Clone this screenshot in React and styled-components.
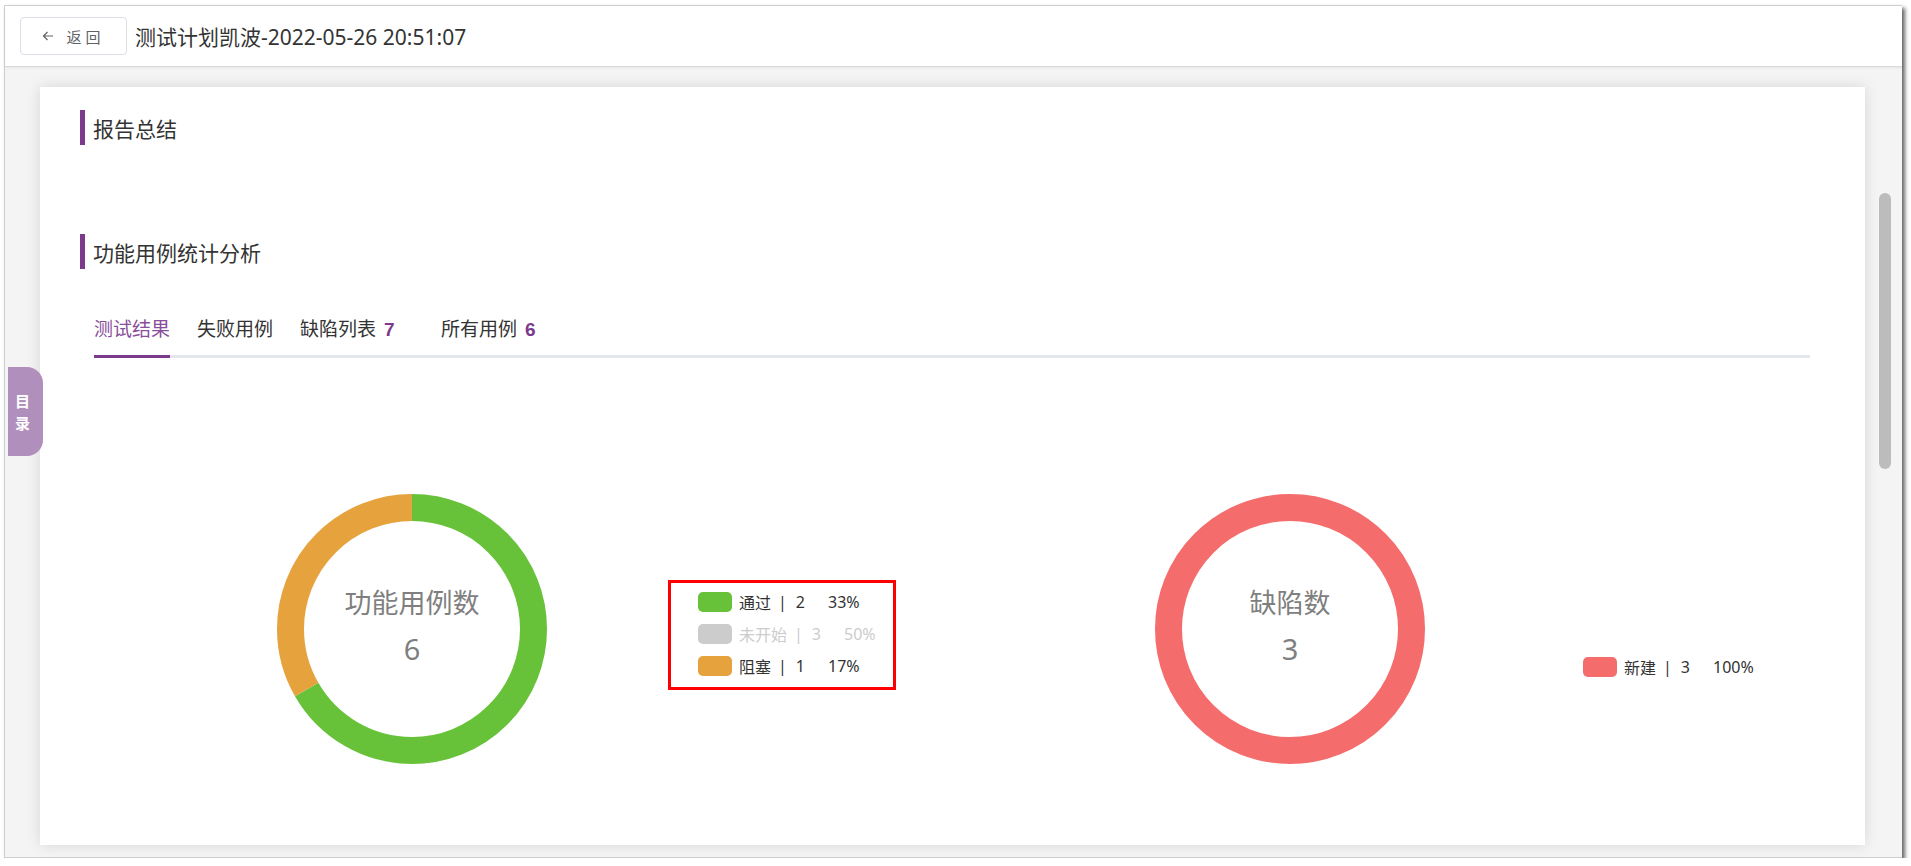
import React from 'react';
import styled, { createGlobalStyle } from 'styled-components';

const GlobalStyle = createGlobalStyle`
  html, body {
    margin: 0;
    padding: 0;
    background: #fff;
    overflow: hidden;
  }
  body {
    font-family: "Noto Sans", "Noto Sans CJK SC", sans-serif;
    color: #333;
  }
  * { box-sizing: border-box; }
`;

const PURPLE = '#7b3a8c';

const Window = styled.div`
  position: relative;
  margin: 5px 0 0 4px;
  width: 1898px;
  height: 853px;
  border: 1px solid #cfcfcf;
  border-right: none;
  box-shadow: 3px 3px 4px rgba(0, 0, 0, 0.6);
  display: flex;
  flex-direction: column;
  background: #f4f4f4;
`;

const Header = styled.div`
  height: 61px;
  flex: none;
  display: flex;
  align-items: center;
  padding-left: 15px;
  background: #fff;
  border-bottom: 1px solid #d8dae0;
  box-shadow: 0 1px 2px rgba(0, 0, 0, 0.06);
  position: relative;
  z-index: 1;
`;

const BackButton = styled.button`
  width: 107px;
  height: 38px;
  border: 1px solid #dcdfe6;
  border-radius: 4px;
  background: #fff;
  display: flex;
  align-items: center;
  justify-content: center;
  gap: 12px;
  padding: 0;
  color: #606266;
  font-family: "Noto Sans CJK SC", sans-serif;
  font-size: 15px;
  letter-spacing: 4px;
  cursor: pointer;
`;

const PageTitle = styled.h1`
  margin: 0 0 0 8px;
  font-size: 21px;
  font-weight: 400;
  color: #333;
`;

const Body = styled.div`
  flex: 1;
  display: flex;
  min-height: 0;
`;

const Main = styled.div`
  flex: 1;
  display: flex;
  padding: 20px 13px 12px 35px;
`;

const Card = styled.div`
  flex: 1;
  background: #fff;
  box-shadow: 0 0 14px rgba(0, 0, 0, 0.12);
  padding: 23px 55px 0 40px;
`;

const ScrollTrack = styled.div`
  width: 24px;
  flex: none;
  padding: 126px 0 0 1px;
`;

const ScrollThumb = styled.div`
  width: 12px;
  height: 276px;
  border-radius: 6px;
  background: #bcbcbc;
`;

const SectionTitle = styled.h2`
  margin: ${p => p.$gap || 0}px 0 0;
  height: 35px;
  display: flex;
  align-items: center;
  border-left: 5px solid ${PURPLE};
  padding-left: 8px;
  font-size: 21px;
  font-weight: 400;
  color: #333;
`;

const TabNav = styled.div`
  margin: 40px 0 0 14px;
  display: flex;
  border-bottom: 3px solid #e4e7ed;
`;

const TabItem = styled.div`
  line-height: 40px;
  padding-bottom: 5px;
  margin-bottom: -3px;
  margin-right: 27px;
  border-bottom: 3px solid ${p => (p.$active ? PURPLE : 'transparent')};
  font-size: 19px;
  color: ${p => (p.$active ? '#8a4f9c' : '#333')};
  display: flex;
  align-items: baseline;
`;

const Count = styled.span`
  margin-left: 8px;
  min-width: 30px;
  font-family: "Liberation Sans", sans-serif;
  font-weight: 700;
  color: ${PURPLE};
`;

const ChartsRow = styled.div`
  margin-top: 136px;
  display: flex;
  align-items: flex-start;
`;

const ChartPanel = styled.div`
  margin-left: ${p => p.$offset}px;
  display: flex;
  align-items: flex-start;
`;

const Legend = styled.div`
  margin-left: ${p => p.$left}px;
  margin-top: ${p => p.$top}px;
  width: ${p => (p.$framed ? '228px' : 'auto')};
  border: ${p => (p.$framed ? '3px solid #ff0000' : 'none')};
  padding: ${p => (p.$framed ? '3px 0 5px 27px' : '0')};
`;

const LegendRow = styled.div`
  height: 32px;
  display: flex;
  align-items: center;
  font-size: 16px;
  color: ${p => (p.$off ? '#cccccc' : '#333')};
  white-space: nowrap;
`;

const Swatch = styled.span`
  width: 34px;
  height: 20px;
  border-radius: 5px;
  margin-right: 7px;
  background: ${p => p.$color};
`;

const Sep = styled.span`
  margin: 0 9px 0 7px;
`;

const Pct = styled.span`
  margin-left: 23px;
`;

const SideTab = styled.div`
  position: absolute;
  left: 3px;
  top: 361px;
  width: 35px;
  height: 89px;
  border-radius: 0 16px 16px 0;
  background: #b08fbd;
  color: #fff;
  font-family: "Noto Sans CJK SC", sans-serif;
  font-size: 15px;
  font-weight: 700;
  display: flex;
  flex-direction: column;
  align-items: center;
  justify-content: center;
  gap: 7px;
  padding-right: 6px;
  line-height: 1;
`;

const R = 121.5;
const C = 2 * Math.PI * R;

function Donut({ segments, label, value }) {
  let offset = 0;
  return (
    <svg width="270" height="270" viewBox="0 0 270 270">
      <g transform="rotate(-90 135 135)">
        {segments.map((s, i) => {
          const len = C * s.part;
          const el = (
            <circle
              key={i}
              cx="135"
              cy="135"
              r={R}
              fill="none"
              stroke={s.color}
              strokeWidth="27"
              strokeDasharray={`${len} ${C}`}
              strokeDashoffset={-offset}
            />
          );
          offset += len;
          return el;
        })}
      </g>
      <text
        x="135"
        y="107"
        textAnchor="middle"
        dominantBaseline="central"
        fill="#7f7f7f"
        fontSize="27"
        fontFamily='"Noto Sans CJK SC", sans-serif'
      >
        {label}
      </text>
      <text
        x="135"
        y="154"
        textAnchor="middle"
        dominantBaseline="central"
        fill="#7f7f7f"
        fontSize="29"
        fontFamily='"Noto Sans", sans-serif'
      >
        {value}
      </text>
    </svg>
  );
}

function LegendItem({ color, name, value, pct, off }) {
  return (
    <LegendRow $off={off}>
      <Swatch $color={off ? '#cccccc' : color} />
      <span>{name}</span>
      <Sep>|</Sep>
      <span>{value}</span>
      <Pct>{pct}</Pct>
    </LegendRow>
  );
}

const caseStats = [
  { name: '通过', value: 2, pct: '33%', color: '#67c23a' },
  { name: '未开始', value: 3, pct: '50%', color: '#cccccc', off: true },
  { name: '阻塞', value: 1, pct: '17%', color: '#e6a23c' },
];

export default function App() {
  return (
    <>
      <GlobalStyle />
      <Window>
        <Header>
          <BackButton>
            <svg width="12" height="12" viewBox="0 0 12 12" fill="none" stroke="#606266" strokeWidth="1.2">
              <path d="M11 6H1.5M5.5 2L1.5 6l4 4" />
            </svg>
            返回
          </BackButton>
          <PageTitle>测试计划凯波-2022-05-26 20:51:07</PageTitle>
        </Header>
        <Body>
          <Main>
            <Card>
              <SectionTitle>报告总结</SectionTitle>
              <SectionTitle $gap={89}>功能用例统计分析</SectionTitle>
              <TabNav>
                <TabItem $active>测试结果</TabItem>
                <TabItem>失败用例</TabItem>
                <TabItem>缺陷列表<Count>7</Count></TabItem>
                <TabItem>所有用例<Count>6</Count></TabItem>
              </TabNav>
              <ChartsRow>
                <ChartPanel $offset={197}>
                  <Donut
                    label="功能用例数"
                    value="6"
                    segments={[
                      { part: 2 / 3, color: '#67c23a' },
                      { part: 1 / 3, color: '#e6a23c' },
                    ]}
                  />
                  <Legend $framed $left={121} $top={86}>
                    {caseStats.map(s => (
                      <LegendItem key={s.name} {...s} />
                    ))}
                  </Legend>
                </ChartPanel>
                <ChartPanel $offset={259}>
                  <Donut label="缺陷数" value="3" segments={[{ part: 1, color: '#f56c6c' }]} />
                  <Legend $left={158} $top={157}>
                    <LegendItem name="新建" value={3} pct="100%" color="#f56c6c" />
                  </Legend>
                </ChartPanel>
              </ChartsRow>
            </Card>
          </Main>
          <ScrollTrack>
            <ScrollThumb />
          </ScrollTrack>
        </Body>
        <SideTab>
          <span>目</span>
          <span>录</span>
        </SideTab>
      </Window>
    </>
  );
}
